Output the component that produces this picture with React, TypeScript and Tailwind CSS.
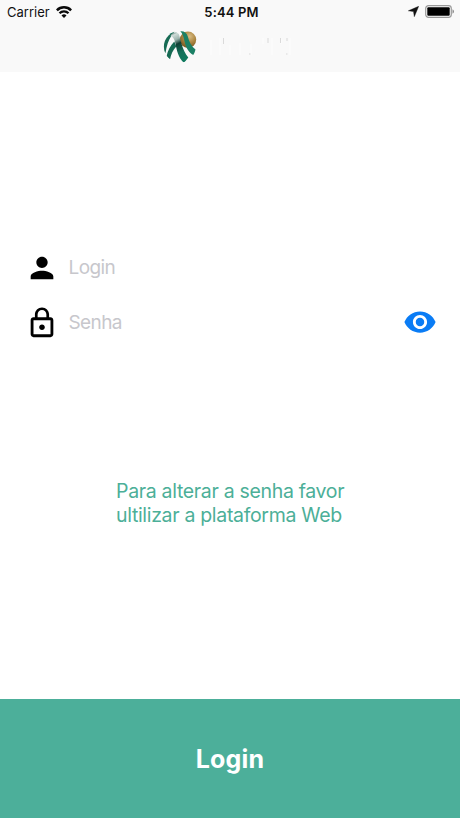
import React from "react";

function WifiIcon() {
  return (
    <svg width="16" height="12" viewBox="0 0 16 12" fill="none" stroke="#0a0a0a">
      <path d="M0.900 4.300a10 10 0 0 1 14.200 0" strokeWidth="2.500" />
      <path d="M3.500 7.200a6.300 6.300 0 0 1 9 0" strokeWidth="2.300" />
      <path d="M8 12 5.500 9.500a3.500 3.500 0 0 1 5 0Z" fill="#0a0a0a" stroke="none" />
    </svg>
  );
}

function BrandLogo() {
  return (
    <svg width="136" height="38" viewBox="160 28 136 38" className="block">
      <defs>
        <radialGradient id="gold" cx="0.6" cy="0.3" r="0.7">
          <stop offset="0" stopColor="#d9bd85" />
          <stop offset="0.5" stopColor="#b08a45" />
          <stop offset="1" stopColor="#7a5a22" />
        </radialGradient>
        <linearGradient id="fade" gradientUnits="userSpaceOnUse" x1="171" y1="32" x2="185" y2="61">
          <stop offset="0" stopColor="#1c4f42" />
          <stop offset="0.12" stopColor="#cfdcd8" />
          <stop offset="0.28" stopColor="#9db5ae" />
          <stop offset="0.42" stopColor="#123f35" />
          <stop offset="0.7" stopColor="#14705a" />
          <stop offset="1" stopColor="#0f7a5e" />
        </linearGradient>
        <clipPath id="globe">
          <circle cx="179.800" cy="46.700" r="15.900" />
        </clipPath>
      </defs>
      <circle cx="188" cy="39.700" r="8.200" fill="url(#gold)" />
      <g clipPath="url(#globe)">
        <path d="M162 38L168 31L174.500 31.500L171.500 35.500C168.500 40 166.500 46 165.500 53L162 50Z" fill="#176b54" />
        <path d="M174.300 41.500C170.500 45.500 167.600 50.500 166.500 56.500L170 59.500C171 54 173 50 176.300 46.500Z" fill="#176b54" />
        <path d="M170.500 36C171.500 32.500 177 31 179 34.500C181 41 182.300 50.500 188.300 57.500L184 63C178 57.500 176.800 50 175.300 43C174.300 39 173 36.500 170.500 36Z" fill="url(#fade)" />
      </g>
      <path d="M180.300 31.300C184 30.800 186.800 32.800 187.800 36.500C189.200 42 191.500 46.800 195.500 49.500C195 51.700 194.300 53.300 193.200 55C187.800 52 185.500 46 184.300 40.500C183.600 36.500 182.500 33.500 180.300 31.300Z" fill="#1b8065" />
      <g stroke="#ffffff" strokeWidth="2" fill="none" opacity="0.350">
        <path d="M211 40v15M220 38v17M230 45v10M240 43v12M251 44v11M263 38v6M272 38v17M281 39v5M290 38v17" />
      </g>
      <g stroke="#d2d2d2" strokeWidth="0.800">
        <path d="M223.500 38v6M268 38v5M280.500 38v5M287 38v3M249 54h1.500M286 54h1.500" />
      </g>
    </svg>
  );
}

export default function App() {
  return (
    <div className="flex h-[818px] w-[460px] flex-col bg-white font-['Inter','Liberation_Sans',sans-serif]">
      <header className="h-[72px] shrink-0 bg-[#f9f9f9]">
        <div className="grid h-6 grid-cols-3 items-center pl-[7px] pr-[5px] text-[13px] text-[#111]">
          <div className="flex items-center gap-[6px]">
            <span className="pt-px">Carrier</span>
            <WifiIcon />
          </div>
          <span className="pl-px pt-px text-center font-semibold tracking-[0.150px]">5:44 PM</span>
          <div className="flex items-center justify-end gap-[6px]">
            <svg width="11" height="11" viewBox="0 0 11 11" className="-mt-0.5">
              <path d="M10.700.3 6.300 10.700 5.500 5.600.3 4.800Z" fill="#111" stroke="#111" strokeWidth="0.400" />
            </svg>
            <svg width="30" height="13" viewBox="0 0 30 13" className="-mt-px">
              <rect x="0.700" y="0.700" width="25.600" height="11.600" rx="2.800" fill="none" stroke="#999" strokeWidth="1.200" />
              <rect x="2.300" y="2.300" width="22.400" height="8.400" rx="1" fill="#000" />
              <path d="M27.500 4.300c2 .8 2 3.600 0 4.400Z" fill="#888" />
            </svg>
          </div>
        </div>
        <div className="flex pl-[160px] pt-1">
          <BrandLogo />
        </div>
      </header>

      <main className="flex grow flex-col pt-[168px]">
        <label className="flex h-[55px] items-center pl-[25px]">
          <svg width="34" height="34" viewBox="0 0 24 24">
            <path d="M12 12c2.210 0 4-1.790 4-4s-1.790-4-4-4-4 1.790-4 4 1.790 4 4 4zm0 2c-2.670 0-8 1.340-8 4v2h16v-2c0-2.660-5.330-4-8-4z" />
          </svg>
          <span className="ml-[9.500px] pt-0.5 text-[19px] tracking-[-0.600px] text-[#c7c7cc]">Login</span>
        </label>
        <label className="flex h-[55px] items-center pl-[25px] pr-[23.500px]">
          <svg width="34" height="34" viewBox="0 0 24 24">
            <path d="M12 17c1.100 0 2-.9 2-2s-.9-2-2-2-2 .9-2 2 .9 2 2 2zm6-9h-1V6c0-2.760-2.240-5-5-5S7 3.240 7 6v2H6c-1.100 0-2 .9-2 2v10c0 1.100.9 2 2 2h12c1.100 0 2-.9 2-2V10c0-1.100-.9-2-2-2zM8.900 6c0-1.710 1.390-3.100 3.100-3.100s3.100 1.390 3.100 3.100v2H8.900V6zM18 20H6V10h12v10z" />
          </svg>
          <span className="ml-[9.500px] grow pt-0.5 text-[19px] tracking-[-0.600px] text-[#c7c7cc]">Senha</span>
          <svg width="34" height="34" viewBox="0 0 24 24" fill="#0a7cf5" className="-mt-0.5">
            <path d="M12 4.500C7 4.500 2.730 7.610 1 12c1.730 4.390 6 7.500 11 7.500s9.270-3.110 11-7.500c-1.730-4.390-6-7.500-11-7.500zM12 17c-2.760 0-5-2.240-5-5s2.240-5 5-5 5 2.240 5 5-2.240 5-5 5zm0-8c-1.660 0-3 1.340-3 3s1.340 3 3 3 3-1.340 3-3-1.340-3-3-3z" />
          </svg>
        </label>
        <p className="mt-[129px] pl-[116px] text-[19.500px] leading-6 tracking-[-0.320px] text-[#4caf98]">
          Para alterar a senha favor
          <br />
          ultilizar a plataforma Web
        </p>
      </main>

      <button className="h-[119px] shrink-0 bg-[#4caf9a] pt-0.5 text-[25px] font-bold tracking-[0.150px] text-white">
        Login
      </button>
    </div>
  );
}
